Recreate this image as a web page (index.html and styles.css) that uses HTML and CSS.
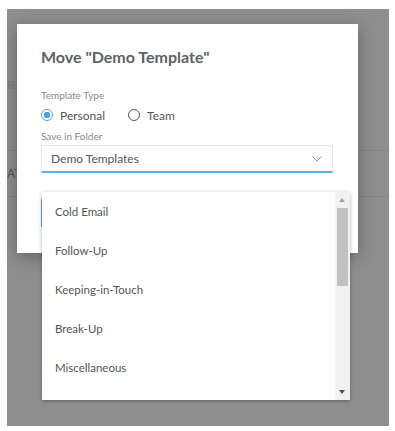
FILE: index.html
```html
<!DOCTYPE html>
<html>
<head>
<meta charset="utf-8">
<link rel="stylesheet" href="styles.css">
</head>
<body>
<div class="backdrop">
  <div class="bg-page">
    <div class="bg-r">R</div>
    <div class="bg-row"><span class="bg-at">AT</span></div>
  </div>
  <div class="modal">
    <h1 class="title">Move "Demo Template"</h1>
    <div class="label">Template Type</div>
    <div class="radios">
      <label class="radio"><span class="dot checked"></span>Personal</label>
      <label class="radio"><span class="dot"></span>Team</label>
    </div>
    <div class="label">Save in Folder</div>
    <div class="select">
      <span>Demo Templates</span>
      <svg class="chev" width="10" height="6" viewBox="0 0 10 6"><path d="M0.5 0.5 L5 5 L9.5 0.5" fill="none" stroke="#9a9a9a" stroke-width="1"/></svg>
    </div>
    <div class="btn"></div>
  </div>
  <div class="dropdown">
    <ul class="items">
      <li>Cold Email</li>
      <li>Follow-Up</li>
      <li>Keeping-in-Touch</li>
      <li>Break-Up</li>
      <li>Miscellaneous</li>
    </ul>
    <div class="scrollbar">
      <span class="arrow up"></span>
      <span class="thumb"></span>
      <span class="arrow down"></span>
    </div>
  </div>
</div>
</body>
</html>
```
FILE: styles.css
```css
* { box-sizing: border-box; }
html, body { margin: 0; padding: 0; background: #fff; }
body { padding: 9px 6px 5px 7px; font-family: "Lato", "Liberation Sans", sans-serif; }
.backdrop {
  position: relative;
  width: 382px;
  height: 417px;
  background: #8e8e8e;
  overflow: hidden;
}
.bg-page { padding-top: 68px; }
.bg-r { font-family: "Liberation Serif", serif; color: #7c7c7c; font-size: 13px; height: 73px; line-height: 16px; }
.bg-row {
  border-top: 1px solid #858585;
  border-bottom: 1px solid #858585;
  height: 47px;
  display: flex;
  align-items: center;
}
.bg-at { font-family: "Liberation Sans", sans-serif; color: #505050; font-size: 12px; }
.modal {
  position: absolute;
  left: 10px;
  top: 15px;
  width: 341px;
  height: 229px;
  background: #fff;
  box-shadow: 0 4px 16px rgba(0,0,0,0.3);
  padding: 22px 24px 0 24px;
}
.title {
  margin: 0;
  font-size: 16px;
  font-weight: 700;
  color: #5e6264;
  line-height: 22px;
}
.label {
  font-size: 10px;
  color: #8a8a8a;
  line-height: 12px;
}
.title + .label { margin-top: 21px; }
.radios {
  display: flex;
  gap: 23px;
  margin: 6px 0 7px;
  height: 16px;
  align-items: center;
}
.radio {
  display: flex;
  align-items: center;
  gap: 7px;
  font-size: 12px;
  color: #555;
}
.dot {
  width: 12px;
  height: 12px;
  border-radius: 50%;
  border: 1.5px solid #555;
  background: #fff;
}
.dot.checked {
  border-color: #4aa3e8;
  background: radial-gradient(circle, #4aa3e8 0 3px, #fff 3.5px);
}
.select {
  margin-top: 3px;
  width: 292px;
  height: 28px;
  border: 1px solid #e6e6e6;
  border-bottom: 2px solid #5fb0e8;
  display: flex;
  align-items: center;
  justify-content: space-between;
  padding: 0 10px 0 9px;
  font-size: 12px;
  color: #555;
}
.chev { margin-top: 1px; }
.btn {
  margin-top: 25px;
  width: 80px;
  height: 30px;
  border: 1px solid #5fb0e8;
  border-radius: 2px;
}
.dropdown {
  position: absolute;
  left: 35px;
  top: 183px;
  width: 308px;
  height: 208px;
  background: #fff;
  box-shadow: 0 1px 4px rgba(0,0,0,0.3);
  display: flex;
}
.items {
  flex: 1;
  list-style: none;
  margin: 0;
  padding: 0;
}
.items li {
  height: 39px;
  line-height: 39px;
  padding-left: 13px;
  font-size: 11.5px;
  color: #555;
}
.scrollbar {
  position: relative;
  width: 15px;
  background: #f1f1f1;
}
.thumb {
  position: absolute;
  left: 2px;
  right: 2px;
  top: 16px;
  height: 78px;
  background: #c1c1c1;
}
.arrow {
  position: absolute;
  left: 4px;
  width: 0;
  height: 0;
  border-left: 3.5px solid transparent;
  border-right: 3.5px solid transparent;
}
.arrow.up { top: 6px; border-bottom: 4px solid #a3a3a3; }
.arrow.down { bottom: 6px; border-top: 4px solid #505050; }
```
